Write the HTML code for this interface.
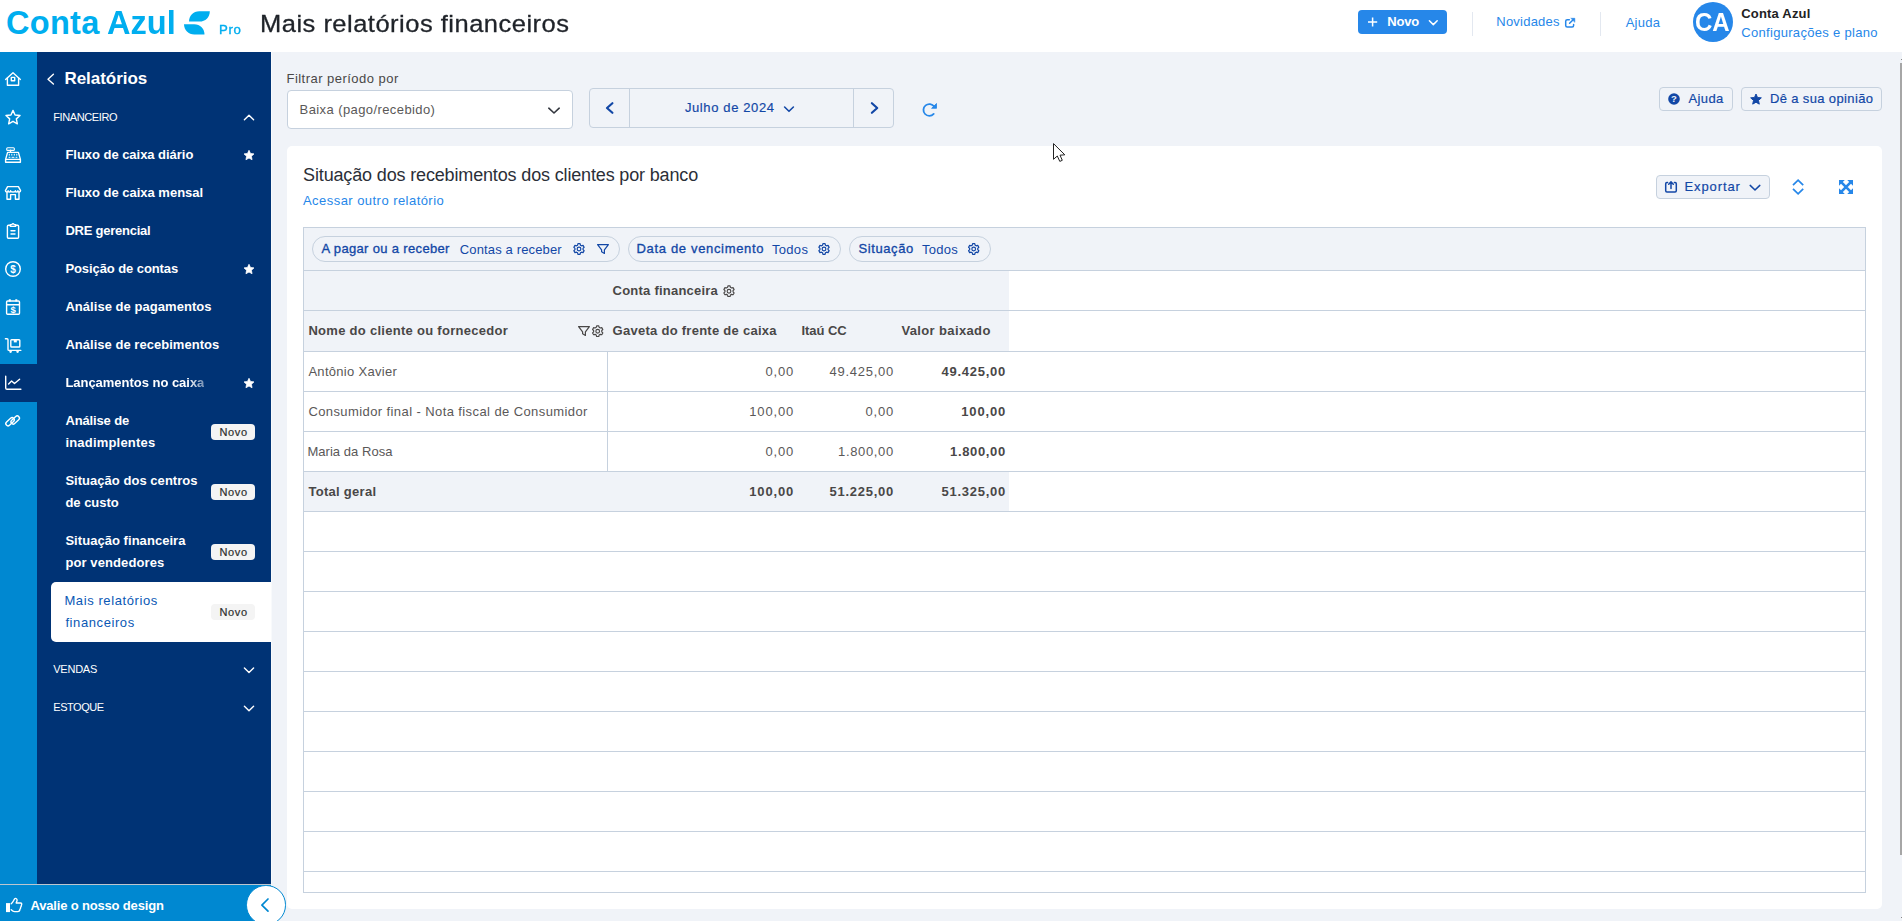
<!DOCTYPE html>
<html><head><meta charset="utf-8"><title>Mais relatórios financeiros</title>
<style>
html,body{margin:0;padding:0}
body{width:1902px;height:921px;position:relative;overflow:hidden;background:#f0f3f8;font-family:"Liberation Sans",sans-serif}
.a{position:absolute}
.t{position:absolute;white-space:nowrap;line-height:1}
svg.o{position:absolute;left:0;top:0}
</style></head><body>
<div class="a" style="left:0px;top:0px;width:1902px;height:52px;background:#fff"></div>
<div class="a" style="left:0px;top:52px;width:37px;height:869px;background:#0088d1"></div>
<div class="a" style="left:37px;top:52px;width:234px;height:832px;background:#003375"></div>
<div class="a" style="left:271px;top:52px;width:1px;height:869px;background:#f8fafc"></div>
<div class="a" style="left:0px;top:364px;width:37px;height:38px;background:#003375"></div>
<div class="a" style="left:51px;top:582px;width:220px;height:60px;background:#fff;border-radius:5px 0 0 5px"></div>
<div class="a" style="left:211px;top:424px;width:44px;height:16px;background:#f4f4f4;border-radius:4px"></div>
<div class="a" style="left:211px;top:484px;width:44px;height:16px;background:#f4f4f4;border-radius:4px"></div>
<div class="a" style="left:211px;top:544px;width:44px;height:16px;background:#f4f4f4;border-radius:4px"></div>
<div class="a" style="left:211px;top:604px;width:44px;height:16px;background:#f4f4f4;border-radius:4px"></div>
<div class="a" style="left:0px;top:884px;width:271px;height:37px;background:#0088d1"></div>
<div class="a" style="left:0px;top:884px;width:271px;height:1px;background:#bcc6cf"></div>
<div class="a" style="left:246.4px;top:885.3px;width:39.5px;height:39.5px;background:#fff;border:1.8px solid #0088d1;border-radius:50%;box-sizing:border-box"></div>
<div class="a" style="left:1358px;top:10px;width:89px;height:24px;background:#2687e9;border-radius:4px"></div>
<div class="a" style="left:1471.5px;top:12px;width:1px;height:24px;background:#e3e8f0"></div>
<div class="a" style="left:1600px;top:12px;width:1px;height:24px;background:#e3e8f0"></div>
<div class="a" style="left:1693px;top:2px;width:40px;height:40px;background:#2687e9;border-radius:50%"></div>
<div class="a" style="left:287px;top:90px;width:286px;height:39px;background:#fff;border:1px solid #c6d1de;border-radius:4px;box-sizing:border-box"></div>
<div class="a" style="left:589px;top:88px;width:305px;height:40px;border:1px solid #c6d1de;border-radius:4px;box-sizing:border-box"></div>
<div class="a" style="left:629px;top:89px;width:1px;height:38px;background:#c6d1de"></div>
<div class="a" style="left:853px;top:89px;width:1px;height:38px;background:#c6d1de"></div>
<div class="a" style="left:1659px;top:87px;width:74px;height:24px;border:1px solid #c6d1de;border-radius:4px;box-sizing:border-box"></div>
<div class="a" style="left:1741px;top:87px;width:141px;height:24px;border:1px solid #c6d1de;border-radius:4px;box-sizing:border-box"></div>
<div class="a" style="left:287px;top:146px;width:1595px;height:763px;background:#fff;border-radius:5px"></div>
<div class="a" style="left:1656px;top:175px;width:114px;height:24px;background:#f0f3f8;border:1px solid #c6d1de;border-radius:4px;box-sizing:border-box"></div>
<div class="a" style="left:303px;top:227px;width:1563px;height:666px;border:1px solid #c6d1de;box-sizing:border-box"></div>
<div class="a" style="left:304px;top:228px;width:1561px;height:42px;background:#f0f3f8"></div>
<div class="a" style="left:304px;top:271px;width:705px;height:80px;background:#f0f3f8"></div>
<div class="a" style="left:304px;top:472px;width:705px;height:39px;background:#f0f3f8"></div>
<div class="a" style="left:304px;top:270px;width:1561px;height:1px;background:#c6d1de"></div>
<div class="a" style="left:304px;top:310px;width:1561px;height:1px;background:#c6d1de"></div>
<div class="a" style="left:304px;top:351px;width:1561px;height:1px;background:#c6d1de"></div>
<div class="a" style="left:304px;top:391px;width:1561px;height:1px;background:#c6d1de"></div>
<div class="a" style="left:304px;top:431px;width:1561px;height:1px;background:#c6d1de"></div>
<div class="a" style="left:304px;top:471px;width:1561px;height:1px;background:#c6d1de"></div>
<div class="a" style="left:304px;top:511px;width:1561px;height:1px;background:#c6d1de"></div>
<div class="a" style="left:304px;top:551px;width:1561px;height:1px;background:#c6d1de"></div>
<div class="a" style="left:304px;top:591px;width:1561px;height:1px;background:#c6d1de"></div>
<div class="a" style="left:304px;top:631px;width:1561px;height:1px;background:#c6d1de"></div>
<div class="a" style="left:304px;top:671px;width:1561px;height:1px;background:#c6d1de"></div>
<div class="a" style="left:304px;top:711px;width:1561px;height:1px;background:#c6d1de"></div>
<div class="a" style="left:304px;top:751px;width:1561px;height:1px;background:#c6d1de"></div>
<div class="a" style="left:304px;top:791px;width:1561px;height:1px;background:#c6d1de"></div>
<div class="a" style="left:304px;top:831px;width:1561px;height:1px;background:#c6d1de"></div>
<div class="a" style="left:304px;top:871px;width:1561px;height:1px;background:#c6d1de"></div>
<div class="a" style="left:607px;top:352px;width:1px;height:119px;background:#c6d1de"></div>
<div class="a" style="left:312px;top:236px;width:308px;height:26px;border:1px solid #c6d1de;border-radius:13px;box-sizing:border-box"></div>
<div class="a" style="left:628px;top:236px;width:213px;height:26px;border:1px solid #c6d1de;border-radius:13px;box-sizing:border-box"></div>
<div class="a" style="left:849px;top:236px;width:142px;height:26px;border:1px solid #c6d1de;border-radius:13px;box-sizing:border-box"></div>
<div class="a" style="left:1900px;top:63px;width:2px;height:792px;background:#a6a6a6"></div>
<div class="a" style="left:1901px;top:59px;width:1px;height:1px;background:#888"></div>
<div class="a" style="left:1901px;top:917px;width:1px;height:1px;background:#888"></div>
<span class="t" id="t0" style="left:6.1px;top:6.9px;font-size:32.5px;font-weight:bold;color:#00aeef;letter-spacing:0.276px;">Conta</span>
<span class="t" id="t1" style="left:107.3px;top:6.9px;font-size:32.5px;font-weight:bold;color:#00aeef;letter-spacing:0px;;transform-origin:0 0;transform:scaleX(1.0019)">Azul</span>
<span class="t" id="t2" style="left:219.04px;top:24px;font-size:12.5px;font-weight:normal;color:#00aeef;letter-spacing:0.575px;-webkit-text-stroke:0.35px #00aeef;transform-origin:0 0;transform:scaleX(1.0585)">Pro</span>
<span class="t" id="t3" style="left:260.22px;top:12.2px;font-size:24.5px;font-weight:normal;color:#1f2329;letter-spacing:0.467px;-webkit-text-stroke:0.3px #1f2329;transform-origin:0 0;transform:scaleX(1.0412)">Mais relatórios financeiros</span>
<span class="t" id="t4" style="left:1387.3px;top:15px;font-size:13px;font-weight:bold;color:#fff;letter-spacing:-0.186px;">Novo</span>
<span class="t" id="t5" style="left:1496.3px;top:15px;font-size:13px;font-weight:normal;color:#2687e9;letter-spacing:0.222px;">Novidades</span>
<span class="t" id="t6" style="left:1625.7px;top:16px;font-size:13px;font-weight:normal;color:#2687e9;letter-spacing:0.245px;">Ajuda</span>
<span class="t" id="t7" style="left:1694.88px;top:8.8px;font-size:26px;font-weight:bold;color:#fff;letter-spacing:0px;;transform-origin:0 0;transform:scaleX(0.9245)">CA</span>
<span class="t" id="t8" style="left:1741.3px;top:6.7px;font-size:13px;font-weight:bold;color:#222;letter-spacing:0.181px;">Conta Azul</span>
<span class="t" id="t9" style="left:1741.3px;top:26px;font-size:13px;font-weight:normal;color:#2687e9;letter-spacing:0.302px;">Configurações e plano</span>
<span class="t" id="t10" style="left:286.5px;top:71.9px;font-size:13px;font-weight:normal;color:#494747;letter-spacing:0.467px;">Filtrar período por</span>
<span class="t" id="t11" style="left:299.6px;top:103px;font-size:13px;font-weight:normal;color:#5a5858;letter-spacing:0.407px;">Baixa (pago/recebido)</span>
<span class="t" id="t12" style="left:684.9px;top:101px;font-size:13px;font-weight:normal;color:#1247a6;letter-spacing:0.621px;-webkit-text-stroke:0.18px #1247a6">Julho de 2024</span>
<span class="t" id="t13" style="left:1688.5px;top:92px;font-size:13px;font-weight:normal;color:#1247a6;letter-spacing:0.37px;-webkit-text-stroke:0.18px #1247a6">Ajuda</span>
<span class="t" id="t14" style="left:1769.9px;top:92px;font-size:13px;font-weight:normal;color:#1247a6;letter-spacing:0.371px;-webkit-text-stroke:0.18px #1247a6">Dê a sua opinião</span>
<span class="t" id="t15" style="left:303.1px;top:166.2px;font-size:18px;font-weight:normal;color:#2b2f38;letter-spacing:-0.152px;">Situação dos recebimentos dos clientes por banco</span>
<span class="t" id="t16" style="left:303px;top:194.2px;font-size:13px;font-weight:normal;color:#2687e9;letter-spacing:0.452px;">Acessar outro relatório</span>
<span class="t" id="t17" style="left:1684.5px;top:180px;font-size:13px;font-weight:normal;color:#1247a6;letter-spacing:0.9px;-webkit-text-stroke:0.18px #1247a6">Exportar</span>
<span class="t" id="t18" style="left:321.6px;top:242px;font-size:13px;font-weight:normal;color:#1247a6;letter-spacing:0.337px;-webkit-text-stroke:0.32px #1247a6">A pagar ou a receber</span>
<span class="t" id="t19" style="left:459.8px;top:242.6px;font-size:13px;font-weight:normal;color:#1247a6;letter-spacing:0.14px;">Contas a receber</span>
<span class="t" id="t20" style="left:636.5px;top:242px;font-size:13px;font-weight:normal;color:#1247a6;letter-spacing:0.665px;-webkit-text-stroke:0.32px #1247a6">Data de vencimento</span>
<span class="t" id="t21" style="left:772px;top:242.6px;font-size:13px;font-weight:normal;color:#1247a6;letter-spacing:0.303px;">Todos</span>
<span class="t" id="t22" style="left:858.5px;top:242px;font-size:13px;font-weight:normal;color:#1247a6;letter-spacing:0.591px;-webkit-text-stroke:0.32px #1247a6">Situação</span>
<span class="t" id="t23" style="left:922px;top:242.6px;font-size:13px;font-weight:normal;color:#1247a6;letter-spacing:0.253px;">Todos</span>
<span class="t" id="t24" style="left:612.6px;top:284px;font-size:13px;font-weight:bold;color:#494747;letter-spacing:0.225px;">Conta financeira</span>
<span class="t" id="t25" style="left:308.4px;top:324px;font-size:13px;font-weight:bold;color:#494747;letter-spacing:0.287px;">Nome do cliente ou fornecedor</span>
<span class="t" id="t26" style="left:612.6px;top:324px;font-size:13px;font-weight:bold;color:#494747;letter-spacing:0.267px;">Gaveta do frente de caixa</span>
<span class="t" id="t27" style="left:801.4px;top:324px;font-size:13px;font-weight:bold;color:#494747;letter-spacing:-0.035px;">Itaú CC</span>
<span class="t" id="t28" style="left:901.4px;top:324px;font-size:13px;font-weight:bold;color:#494747;letter-spacing:0.367px;">Valor baixado</span>
<span class="t" id="t29" style="left:308.4px;top:365px;font-size:13px;font-weight:normal;color:#5a5858;letter-spacing:0.298px;">Antônio Xavier</span>
<span class="t" id="t30" style="left:308.4px;top:405px;font-size:13px;font-weight:normal;color:#5a5858;letter-spacing:0.406px;">Consumidor final - Nota fiscal de Consumidor</span>
<span class="t" id="t31" style="left:307.4px;top:445px;font-size:13px;font-weight:normal;color:#5a5858;letter-spacing:0.049px;">Maria da Rosa</span>
<span class="t" id="t32" style="left:308.4px;top:485px;font-size:13px;font-weight:bold;color:#494747;letter-spacing:0.294px;">Total geral</span>
<span class="t" id="t33" style="left:765.5px;top:365px;font-size:13px;font-weight:normal;color:#5a5858;letter-spacing:0.809px;">0,00</span>
<span class="t" id="t34" style="left:829.5px;top:365px;font-size:13px;font-weight:normal;color:#5a5858;letter-spacing:0.737px;">49.425,00</span>
<span class="t" id="t35" style="left:941.5px;top:365px;font-size:13px;font-weight:bold;color:#494747;letter-spacing:0.737px;">49.425,00</span>
<span class="t" id="t36" style="left:749.3px;top:405px;font-size:13px;font-weight:normal;color:#5a5858;letter-spacing:0.834px;">100,00</span>
<span class="t" id="t37" style="left:865.5px;top:405px;font-size:13px;font-weight:normal;color:#5a5858;letter-spacing:0.809px;">0,00</span>
<span class="t" id="t38" style="left:961.3px;top:405px;font-size:13px;font-weight:bold;color:#494747;letter-spacing:0.834px;">100,00</span>
<span class="t" id="t39" style="left:765.5px;top:445px;font-size:13px;font-weight:normal;color:#5a5858;letter-spacing:0.809px;">0,00</span>
<span class="t" id="t40" style="left:838px;top:445px;font-size:13px;font-weight:normal;color:#5a5858;letter-spacing:0.661px;">1.800,00</span>
<span class="t" id="t41" style="left:950px;top:445px;font-size:13px;font-weight:bold;color:#494747;letter-spacing:0.661px;">1.800,00</span>
<span class="t" id="t42" style="left:749.3px;top:485px;font-size:13px;font-weight:bold;color:#494747;letter-spacing:0.834px;">100,00</span>
<span class="t" id="t43" style="left:829.5px;top:485px;font-size:13px;font-weight:bold;color:#494747;letter-spacing:0.737px;">51.225,00</span>
<span class="t" id="t44" style="left:941.5px;top:485px;font-size:13px;font-weight:bold;color:#494747;letter-spacing:0.737px;">51.325,00</span>
<span class="t" id="t45" style="left:64.4px;top:69.75px;font-size:17px;font-weight:bold;color:#fff;letter-spacing:-0.031px;">Relatórios</span>
<span class="t" id="t46" style="left:53.3px;top:111.9px;font-size:11px;font-weight:normal;color:#fff;letter-spacing:-0.398px;">FINANCEIRO</span>
<span class="t" id="t47" style="left:53.3px;top:663.8px;font-size:11px;font-weight:normal;color:#fff;letter-spacing:-0.26px;">VENDAS</span>
<span class="t" id="t48" style="left:53.3px;top:701.8px;font-size:11px;font-weight:normal;color:#fff;letter-spacing:-0.458px;">ESTOQUE</span>
<span class="t" id="t49" style="left:65.4px;top:147.9px;font-size:13px;font-weight:bold;color:#fff;letter-spacing:-0.033px;">Fluxo de caixa diário</span>
<span class="t" id="t50" style="left:65.4px;top:185.8px;font-size:13px;font-weight:bold;color:#fff;letter-spacing:-0.015px;">Fluxo de caixa mensal</span>
<span class="t" id="t51" style="left:65.4px;top:223.9px;font-size:13px;font-weight:bold;color:#fff;letter-spacing:-0.236px;">DRE gerencial</span>
<span class="t" id="t52" style="left:65.4px;top:262px;font-size:13px;font-weight:bold;color:#fff;letter-spacing:-0.082px;">Posição de contas</span>
<span class="t" id="t53" style="left:65.4px;top:299.8px;font-size:13px;font-weight:bold;color:#fff;letter-spacing:0.046px;">Análise de pagamentos</span>
<span class="t" id="t54" style="left:65.4px;top:337.9px;font-size:13px;font-weight:bold;color:#fff;letter-spacing:0.03px;">Análise de recebimentos</span>
<span class="t" id="t55" style="left:65.4px;top:376.1px;font-size:13px;font-weight:bold;color:#fff;letter-spacing:-0.027px;-webkit-mask-image:linear-gradient(90deg,#000 88%,rgba(0,0,0,.45) 100%)">Lançamentos no caixa</span>
<span class="t" id="t56" style="left:65.4px;top:413.8px;font-size:13px;font-weight:bold;color:#fff;letter-spacing:-0.133px;">Análise de</span>
<span class="t" id="t57" style="left:65.4px;top:435.9px;font-size:13px;font-weight:bold;color:#fff;letter-spacing:0.194px;">inadimplentes</span>
<span class="t" id="t58" style="left:65.4px;top:473.7px;font-size:13px;font-weight:bold;color:#fff;letter-spacing:0.034px;">Situação dos centros</span>
<span class="t" id="t59" style="left:65.4px;top:495.6px;font-size:13px;font-weight:bold;color:#fff;letter-spacing:-0.016px;">de custo</span>
<span class="t" id="t60" style="left:65.4px;top:533.8px;font-size:13px;font-weight:bold;color:#fff;letter-spacing:0.046px;">Situação financeira</span>
<span class="t" id="t61" style="left:65.4px;top:555.6px;font-size:13px;font-weight:bold;color:#fff;letter-spacing:0.1px;">por vendedores</span>
<span class="t" id="t62" style="left:64.4px;top:593.7px;font-size:13px;font-weight:normal;color:#0a58b5;letter-spacing:0.598px;">Mais relatórios</span>
<span class="t" id="t63" style="left:65.4px;top:615.6px;font-size:13px;font-weight:normal;color:#0a58b5;letter-spacing:0.593px;">financeiros</span>
<span class="t" id="t64" style="left:219.4px;top:426.8px;font-size:11px;font-weight:normal;color:#2e2e2e;letter-spacing:0.679px;-webkit-text-stroke:0.2px #2e2e2e">Novo</span>
<span class="t" id="t65" style="left:219.4px;top:486.8px;font-size:11px;font-weight:normal;color:#2e2e2e;letter-spacing:0.679px;-webkit-text-stroke:0.2px #2e2e2e">Novo</span>
<span class="t" id="t66" style="left:219.4px;top:546.8px;font-size:11px;font-weight:normal;color:#2e2e2e;letter-spacing:0.679px;-webkit-text-stroke:0.2px #2e2e2e">Novo</span>
<span class="t" id="t67" style="left:219.4px;top:606.8px;font-size:11px;font-weight:normal;color:#2e2e2e;letter-spacing:0.679px;-webkit-text-stroke:0.2px #2e2e2e">Novo</span>
<span class="t" id="t68" style="left:30.4px;top:898.9px;font-size:13px;font-weight:bold;color:#fff;letter-spacing:-0.162px;">Avalie o nosso design</span>
<svg class="o" width="1902" height="921" viewBox="0 0 1902 921"><path fill="#00aeef" d="M189,21.6 C189,15.6 193.2,11.2 199.3,11.2 L209.8,11.2 C209.8,17.2 205.4,21.6 199.5,21.6 Z"/>
<path fill="#00aeef" d="M184,24.2 L194.2,24.2 C200.2,24.2 204.5,28.8 204.5,34.4 L194.3,34.4 C188.4,34.4 184,30 184,24.2 Z"/>
<g fill="none" stroke="#fff" stroke-width="1.4" stroke-linecap="round" stroke-linejoin="round"><path d="M5.6,79.4 L13,72.8 L20.4,79.4"/><path d="M7.4,78 V85.3 H18.6 V78"/><rect x="11.3" y="77.4" width="3.4" height="3.4"/></g>
<path fill="none" stroke="#fff" stroke-width="1.4" stroke-linecap="round" stroke-linejoin="round" d="M13.00,110.40 L15.06,114.97 L20.04,115.51 L16.33,118.88 L17.35,123.79 L13.00,121.30 L8.65,123.79 L9.67,118.88 L5.96,115.51 L10.94,114.97Z"/>
<g fill="none" stroke="#fff" stroke-width="1.4" stroke-linecap="round" stroke-linejoin="round"><rect x="6.7" y="147.7" width="7.7" height="2.7" rx="1" stroke-width="1.1"/><path d="M10.5,150.3 V152.4"/><path d="M7.6,152.4 H18.4 L20.4,159.4 V162.2 H5.6 V159.4 Z"/><path d="M5.8,159.4 H20.2"/><path stroke-width="1" d="M9.3,154.2 V155.2 M11.8,154.2 V155.2 M14.3,154.2 V155.2 M16.8,154.2 V155.2 M9,157.3 H10 M12,157.3 H14 M16,157.3 H17"/></g>
<g fill="none" stroke="#fff" stroke-width="1.4" stroke-linecap="round" stroke-linejoin="round"><path d="M7.6,186.6 H18.4 L20.6,190.6 C20.6,192.4 18,192.4 17.9,190.8 C17.8,192.4 15.5,192.4 15.4,190.8 C15.3,192.4 10.7,192.4 10.6,190.8 C10.5,192.4 8.2,192.4 8.1,190.8 C8,192.4 5.4,192.4 5.4,190.6 Z"/><path d="M7,192.5 V199.3 H10.6 V194.6 H15.4 V199.3 H19 V192.5"/></g>
<g fill="none" stroke="#fff" stroke-width="1.4" stroke-linecap="round" stroke-linejoin="round"><path d="M10.4,225.2 H8.4 Q7.4,225.2 7.4,226.2 V237.3 Q7.4,238.3 8.4,238.3 H17.6 Q18.6,238.3 18.6,237.3 V226.2 Q18.6,225.2 17.6,225.2 H15.6"/><path d="M10.4,226.4 V224.6 H11.8 Q13,222.6 14.2,224.6 H15.6 V226.4 Z"/><path d="M11,230.7 H15 M11,234 H15"/></g>
<circle cx="13" cy="269" r="7.3" fill="none" stroke="#fff" stroke-width="1.4" stroke-linecap="round" stroke-linejoin="round" stroke-width="1.4"/><text x="13" y="272.6" text-anchor="middle" font-family="Liberation Sans" font-weight="bold" font-size="10" fill="#fff">$</text>
<g fill="none" stroke="#fff" stroke-width="1.4" stroke-linecap="round" stroke-linejoin="round"><rect x="6.6" y="301" width="12.9" height="13.3" rx="1"/><path d="M6.8,304.8 H19.3"/><path stroke-width="2" stroke-linecap="butt" d="M9.8,299.2 V301.4 M16.3,299.2 V301.4"/></g><text x="13.1" y="312.6" text-anchor="middle" font-family="Liberation Sans" font-weight="bold" font-size="9.5" fill="#fff">$</text>
<g fill="none" stroke="#fff" stroke-width="1.4" stroke-linecap="round" stroke-linejoin="round"><path d="M5.4,338.8 H7 Q8,338.8 8,339.8 V349.4 Q8,350.4 9,350.4 H20.8"/><rect x="10.8" y="339.8" width="9" height="7.2" rx="0.8"/><rect x="13.8" y="339.8" width="3" height="2.6" fill="#fff" stroke="none"/><circle cx="10.6" cy="351.6" r="0.6"/><circle cx="17.6" cy="351.6" r="0.6"/></g>
<g fill="none" stroke="#fff" stroke-width="1.4" stroke-linecap="round" stroke-linejoin="round" stroke-width="1.4"><path d="M5.7,376.3 V388 Q5.7,389.3 7,389.3 H20.9"/><path d="M8.6,384 L11.6,380.9 L14.5,383.5 L19.6,379.2"/></g>
<g fill="none" stroke="#fff" stroke-width="1.4" stroke-linecap="round" stroke-linejoin="round" stroke-width="1.5"><rect x="-4.9" y="-2.2" width="9.8" height="4.4" rx="2.2" transform="translate(10.05 421.75) rotate(-42)"/><rect x="-4.9" y="-2.2" width="9.8" height="4.4" rx="2.2" transform="translate(15.2 420) rotate(-42)"/></g>
<path fill="none" stroke="#fff" stroke-width="1.4" stroke-linecap="round" stroke-linejoin="round" stroke-width="1.5" d="M53.4,74.3 L48,79.2 L53.4,84"/>
<path fill="none" stroke="#fff" stroke-width="1.4" stroke-linecap="round" stroke-linejoin="round" stroke-width="1.4" d="M244.4,119.8 L249,115.2 L253.6,119.8"/>
<path fill="none" stroke="#fff" stroke-width="1.4" stroke-linecap="round" stroke-linejoin="round" stroke-width="1.4" d="M244.4,668 L249,672.6 L253.6,668"/>
<path fill="none" stroke="#fff" stroke-width="1.4" stroke-linecap="round" stroke-linejoin="round" stroke-width="1.4" d="M244.4,706.2 L249,710.8 L253.6,706.2"/>
<path fill="#fff" stroke="#fff" stroke-width="0.8" stroke-linejoin="round" d="M249.00,150.30 L250.47,153.48 L253.95,153.89 L251.38,156.27 L252.06,159.71 L249.00,158.00 L245.94,159.71 L246.62,156.27 L244.05,153.89 L247.53,153.48Z"/>
<path fill="#fff" stroke="#fff" stroke-width="0.8" stroke-linejoin="round" d="M249.00,264.30 L250.47,267.48 L253.95,267.89 L251.38,270.27 L252.06,273.71 L249.00,272.00 L245.94,273.71 L246.62,270.27 L244.05,267.89 L247.53,267.48Z"/>
<path fill="#fff" stroke="#fff" stroke-width="0.8" stroke-linejoin="round" d="M249.00,378.30 L250.47,381.48 L253.95,381.89 L251.38,384.27 L252.06,387.71 L249.00,386.00 L245.94,387.71 L246.62,384.27 L244.05,381.89 L247.53,381.48Z"/>
<rect x="6" y="903.1" width="4" height="9" fill="#fff"/><path fill="none" stroke="#fff" stroke-width="1.4" stroke-linecap="round" stroke-linejoin="round" stroke-width="1.2" d="M11.2,903.8 C12.8,902.6 13.6,900.5 14.6,898.9 C15.3,897.9 17.2,898.5 17.1,900.2 C17,901.3 16.4,902 16.2,903 H20.5 C21.8,903 22,904.3 21.4,905.2 C21.4,906 21,906.8 20.6,907.4 C20.7,908.3 20.3,909 19.8,909.6 C19.8,910.8 19,911.6 17.8,911.6 H14.5 C13.2,911.6 12.2,910.8 11.2,909.8"/>
<path fill="none" stroke="#0088d1" stroke-width="1.7" stroke-linecap="round" stroke-linejoin="round" d="M268,899 L261.9,905.1 L268,911.2"/>
<path stroke="#fff" stroke-width="1.5" fill="none" d="M1368,22 H1377.2 M1372.6,17.4 V26.6"/>
<path stroke="#fff" stroke-width="1.5" fill="none" stroke-linecap="round" stroke-linejoin="round" d="M1429.4,20.8 L1433.3,24.6 L1437.2,20.8"/>
<g fill="none" stroke="#2687e9" stroke-width="1.5" stroke-linecap="round" stroke-linejoin="round"><path d="M1569.3,19.7 H1567.2 Q1565.7,19.7 1565.7,21.2 V25.6 Q1565.7,27.1 1567.2,27.1 H1572.1 Q1573.6,27.1 1573.6,25.6 V24.5"/><path d="M1569.6,23.3 L1573.4,19.5"/><path fill="#2687e9" stroke-width="0.6" d="M1571.2,18.3 H1574.8 V21.9 Z"/></g>
<path stroke="#33373f" stroke-width="1.6" fill="none" stroke-linecap="round" stroke-linejoin="round" d="M548.8,108.2 L554,113 L559.2,108.2"/>
<path stroke="#1247a6" stroke-width="2.2" fill="none" stroke-linecap="round" stroke-linejoin="round" d="M612.4,103.2 L607,108 L612.4,112.8"/>
<path stroke="#1247a6" stroke-width="2.2" fill="none" stroke-linecap="round" stroke-linejoin="round" d="M871.9,103.2 L877.2,108 L871.9,112.8"/>
<path stroke="#1247a6" stroke-width="1.6" fill="none" stroke-linecap="round" stroke-linejoin="round" d="M784.6,107 L789,111.3 L793.4,107"/>
<path stroke="#2687e9" stroke-width="1.8" fill="none" stroke-linecap="round" d="M934.2,106.6 A5.9,5.9 0 1 0 933.7,113.95"/><path fill="#2687e9" stroke="#2687e9" stroke-width="0.8" stroke-linejoin="round" d="M936.5,103.5 V108.3 H931.6 Z"/>
<circle cx="1674" cy="99" r="5.8" fill="#1247a6"/><text x="1674" y="102.4" text-anchor="middle" font-family="Liberation Sans" font-weight="bold" font-size="9.5" fill="#f0f3f8">?</text>
<path fill="#1247a6" stroke="#1247a6" stroke-width="1" stroke-linejoin="round" d="M1756.00,94.00 L1757.53,97.50 L1761.33,97.87 L1758.47,100.40 L1759.29,104.13 L1756.00,102.20 L1752.71,104.13 L1753.53,100.40 L1750.67,97.87 L1754.47,97.50Z"/>
<g fill="none" stroke="#1247a6" stroke-width="1.5" stroke-linecap="round" stroke-linejoin="round"><path d="M1667.6,182.6 H1666.9 Q1665.7,182.6 1665.7,183.8 V190.8 Q1665.7,192 1666.9,192 H1675.1 Q1676.3,192 1676.3,190.8 V183.8 Q1676.3,182.6 1675.1,182.6 H1674.4"/><path d="M1671,188.4 V182.4 M1668.7,184.2 L1671,181.9 L1673.3,184.2"/></g>
<path stroke="#1247a6" stroke-width="1.5" fill="none" stroke-linecap="round" stroke-linejoin="round" d="M1750.2,185.4 L1755,190 L1759.8,185.4"/>
<path stroke="#2687e9" stroke-width="1.7" fill="none" d="M1793,185.2 L1798.1,180.1 L1803.2,185.2 M1793,188.8 L1798.1,193.9 L1803.2,188.8"/>
<g fill="#2687e9"><path d="M1839,180 h5.8 l-5.8,5.8z M1853,180 v5.8 l-5.8,-5.8z M1839,194 v-5.8 l5.8,5.8z M1853,194 h-5.8 l5.8,-5.8z"/><path stroke="#2687e9" stroke-width="2.6" d="M1841.2,182.2 L1850.8,191.8 M1850.8,182.2 L1841.2,191.8"/></g>
<path fill="none" stroke="#1247a6" stroke-width="1.2" stroke-linejoin="round" d="M577.56,245.16 L577.93,243.71 L580.07,243.71 L580.44,245.16 L581.60,245.83 L583.05,245.42 L584.12,247.28 L583.05,248.33 L583.05,249.67 L584.12,250.72 L583.05,252.58 L581.60,252.17 L580.44,252.84 L580.07,254.29 L577.93,254.29 L577.56,252.84 L576.40,252.17 L574.95,252.58 L573.88,250.72 L574.95,249.67 L574.95,248.33 L573.88,247.28 L574.95,245.42 L576.40,245.83Z"/><circle cx="579" cy="249" r="1.85" fill="none" stroke="#1247a6" stroke-width="1.2"/>
<path fill="none" stroke="#1247a6" stroke-width="1.2" stroke-linejoin="round" d="M597.6,244.6 h10.8 l-4.0,5.2 v3.6 l-2.8,-1.6 v-2 Z"/>
<path fill="none" stroke="#1247a6" stroke-width="1.2" stroke-linejoin="round" d="M822.56,245.16 L822.93,243.71 L825.07,243.71 L825.44,245.16 L826.60,245.83 L828.05,245.42 L829.12,247.28 L828.05,248.33 L828.05,249.67 L829.12,250.72 L828.05,252.58 L826.60,252.17 L825.44,252.84 L825.07,254.29 L822.93,254.29 L822.56,252.84 L821.40,252.17 L819.95,252.58 L818.88,250.72 L819.95,249.67 L819.95,248.33 L818.88,247.28 L819.95,245.42 L821.40,245.83Z"/><circle cx="824" cy="249" r="1.85" fill="none" stroke="#1247a6" stroke-width="1.2"/>
<path fill="none" stroke="#1247a6" stroke-width="1.2" stroke-linejoin="round" d="M972.26,245.16 L972.63,243.71 L974.77,243.71 L975.14,245.16 L976.30,245.83 L977.75,245.42 L978.82,247.28 L977.75,248.33 L977.75,249.67 L978.82,250.72 L977.75,252.58 L976.30,252.17 L975.14,252.84 L974.77,254.29 L972.63,254.29 L972.26,252.84 L971.10,252.17 L969.65,252.58 L968.58,250.72 L969.65,249.67 L969.65,248.33 L968.58,247.28 L969.65,245.42 L971.10,245.83Z"/><circle cx="973.7" cy="249" r="1.85" fill="none" stroke="#1247a6" stroke-width="1.2"/>
<path fill="none" stroke="#494747" stroke-width="1.2" stroke-linejoin="round" d="M578.6,326.6 h10.8 l-4.0,5.2 v3.6 l-2.8,-1.6 v-2 Z"/>
<path fill="none" stroke="#494747" stroke-width="1.15" stroke-linejoin="round" d="M596.26,327.36 L596.63,325.91 L598.77,325.91 L599.14,327.36 L600.30,328.03 L601.75,327.62 L602.82,329.48 L601.75,330.53 L601.75,331.87 L602.82,332.92 L601.75,334.78 L600.30,334.37 L599.14,335.04 L598.77,336.49 L596.63,336.49 L596.26,335.04 L595.10,334.37 L593.65,334.78 L592.58,332.92 L593.65,331.87 L593.65,330.53 L592.58,329.48 L593.65,327.62 L595.10,328.03Z"/><circle cx="597.7" cy="331.2" r="1.85" fill="none" stroke="#494747" stroke-width="1.15"/>
<path fill="none" stroke="#494747" stroke-width="1.15" stroke-linejoin="round" d="M727.56,287.36 L727.93,285.91 L730.07,285.91 L730.44,287.36 L731.60,288.03 L733.05,287.62 L734.12,289.48 L733.05,290.53 L733.05,291.87 L734.12,292.92 L733.05,294.78 L731.60,294.37 L730.44,295.04 L730.07,296.49 L727.93,296.49 L727.56,295.04 L726.40,294.37 L724.95,294.78 L723.88,292.92 L724.95,291.87 L724.95,290.53 L723.88,289.48 L724.95,287.62 L726.40,288.03Z"/><circle cx="729" cy="291.2" r="1.85" fill="none" stroke="#494747" stroke-width="1.15"/>
<path fill="#fff" stroke="#222" stroke-width="1" stroke-linejoin="round" d="M1053.5,143.6 L1053.5,159.3 L1057.3,156 L1059.8,161.4 L1062.3,160.3 L1060,155.2 L1064.8,154.8 Z"/></svg>
</body></html>
